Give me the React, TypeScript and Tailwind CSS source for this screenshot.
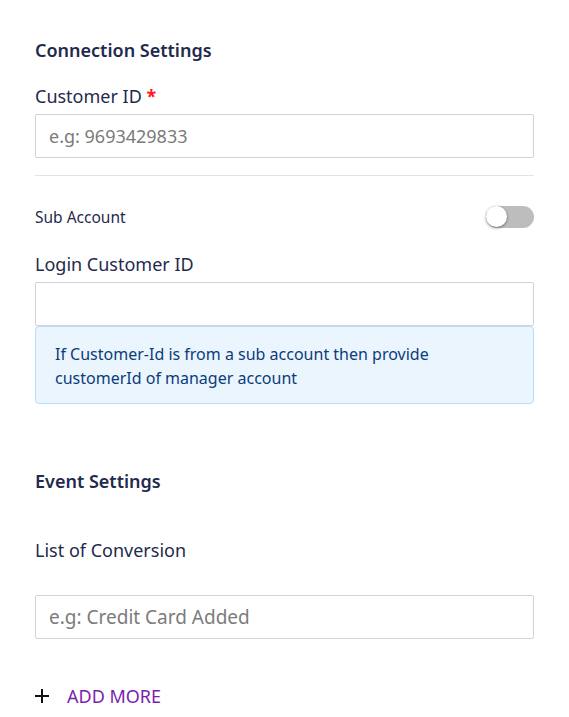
import React from "react";

export default function App() {
  return (
    <div
      className="w-[569px] min-h-[717px] bg-white px-[35px] text-[#1f2a4d]"
      style={{ fontFamily: '"Noto Sans", "Open Sans", sans-serif' }}
    >
      <div className="pt-[38px] text-[18px] font-semibold leading-[24px]">Connection Settings</div>

      <div className="mt-[21px] text-[18px] leading-[26px]">
        Customer ID <span className="text-[#ff1a1a] font-bold">*</span>
      </div>
      <input
        className="mt-[5px] block w-full h-[44px] border border-[#cfd3dc] rounded-[2px] px-[13px] text-[18px] text-[#333] placeholder:text-[#7b7b7b] outline-none"
        placeholder="e.g: 9693429833"
      />

      <div className="mt-[17px] h-px bg-[#e3e3e3]" />

      <div className="mt-[29px] flex items-center justify-between h-[24px]">
        <span className="text-[15.5px] leading-[20px]">Sub Account</span>
        <div className="relative w-[48px] h-[22px] rounded-full bg-[#bdbdbd] -mt-[1px]">
          <div className="absolute left-0 top-[0.5px] w-[21px] h-[21px] rounded-full bg-white shadow-[0_1px_3px_rgba(0,0,0,0.45)]" />
        </div>
      </div>

      <div className="mt-[22px] text-[18px] leading-[26px]">Login Customer ID</div>
      <input className="mt-[5px] block w-full h-[44px] border border-[#cfd3dc] rounded-[2px] px-[13px] text-[18px] outline-none" />
      <div className="rounded-[4px] border border-[#b9dcfa] bg-[#eaf5fe] px-[19px] pt-[15px] pb-[13px] text-[16px] leading-[24px] text-[#0d3c7a]">
        If Customer-Id is from a sub account then provide
        <br />
        customerId of manager account
      </div>

      <div className="mt-[65px] text-[18px] font-semibold leading-[24px]">Event Settings</div>

      <div className="mt-[45px] text-[18px] leading-[24px]">List of Conversion</div>

      <input
        className="mt-[33px] block w-full h-[44px] border border-[#cfd3dc] rounded-[2px] px-[13px] text-[19px] text-[#333] placeholder:text-[#7b7b7b] outline-none"
        placeholder="e.g: Credit Card Added"
      />

      <div className="mt-[45px] flex items-center gap-[18px]">
        <svg width="14" height="14" viewBox="0 0 14 14" className="shrink-0">
          <path d="M7 0v14M0 7h14" stroke="#111" strokeWidth="2" />
        </svg>
        <span className="text-[18px] leading-[24px] text-[#7b1fb0]">ADD MORE</span>
      </div>
    </div>
  );
}
